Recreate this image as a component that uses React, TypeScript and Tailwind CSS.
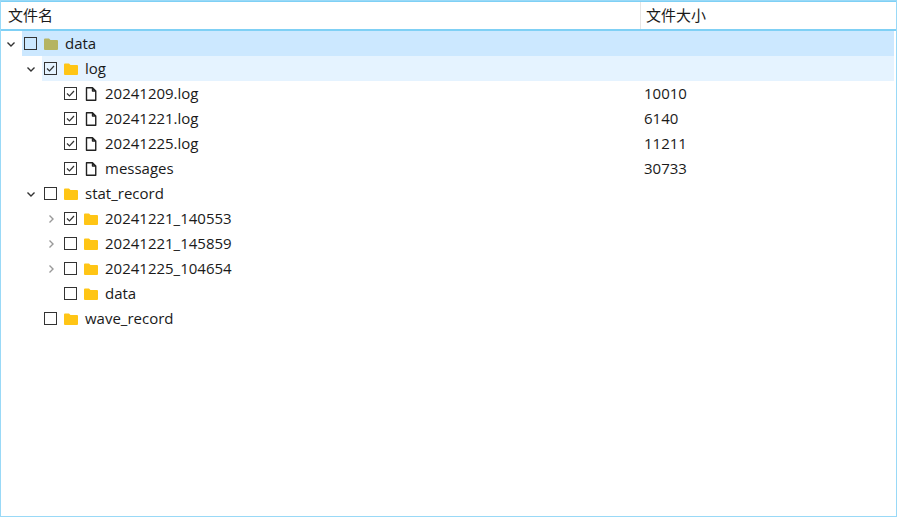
const rows: { name: string; level: number; exp?: "open" | "closed"; checked: boolean; type: "folder" | "file" | "root"; size?: string; bg?: string }[] = [
  { name: "data", level: 0, exp: "open", checked: false, type: "root", bg: "bg-[#cce8ff]" },
  { name: "log", level: 1, exp: "open", checked: true, type: "folder", bg: "bg-[#e5f3ff]" },
  { name: "20241209.log", level: 2, checked: true, type: "file", size: "10010" },
  { name: "20241221.log", level: 2, checked: true, type: "file", size: "6140" },
  { name: "20241225.log", level: 2, checked: true, type: "file", size: "11211" },
  { name: "messages", level: 2, checked: true, type: "file", size: "30733" },
  { name: "stat_record", level: 1, exp: "open", checked: false, type: "folder" },
  { name: "20241221_140553", level: 2, exp: "closed", checked: true, type: "folder" },
  { name: "20241221_145859", level: 2, exp: "closed", checked: false, type: "folder" },
  { name: "20241225_104654", level: 2, exp: "closed", checked: false, type: "folder" },
  { name: "data", level: 2, checked: false, type: "folder" },
  { name: "wave_record", level: 1, checked: false, type: "folder" },
];

function Folder({ color }: { color: string }) {
  return (
    <svg width="14" height="12" viewBox="0 0 14 12">
      <path d="M0 1.5 Q0 0.5 1 0.5 H5 L6.5 2 H13 Q14 2 14 3 V11 Q14 12 13 12 H1 Q0 12 0 11 Z" fill={color} />
    </svg>
  );
}

function FileIcon() {
  return (
    <svg width="12" height="14" viewBox="0 0 12 14">
      <path d="M1.5 0.75 H7.5 L10.75 4 V13.25 H1.5 Z M7.5 0.75 V4 H10.75" fill="none" stroke="#222" strokeWidth="1.4" strokeLinejoin="round" />
    </svg>
  );
}

function Chevron({ open }: { open: boolean }) {
  return (
    <svg width="10" height="10" viewBox="0 0 10 10">
      {open ? (
        <path d="M1.5 3.5 L5 7 L8.5 3.5" fill="none" stroke="#333" strokeWidth="1.4" />
      ) : (
        <path d="M3.5 1.5 L7 5 L3.5 8.5" fill="none" stroke="#999" strokeWidth="1.4" />
      )}
    </svg>
  );
}

export default function App() {
  return (
    <div
      className="w-[897px] h-[517px] bg-white border border-[#99d9f7] text-[15px] text-[#1a1a1a] overflow-hidden"
      style={{ fontFamily: '"Open Sans", "Noto Sans CJK SC", sans-serif' }}
    >
      <div className="h-[31px] flex border-t-2 border-x border-b-2 border-[#7fd0f5] -mx-px -mt-px">
        <div className="w-[640px] pl-[7px] flex items-center border-r border-[#e5e5e5]">文件名</div>
        <div className="flex-1 pl-[5px] flex items-center">文件大小</div>
      </div>
      <div className="pr-[2px]">
        {rows.map((r, i) => (
          <div key={i} className="h-[25px] flex items-center">
            <div style={{ width: 21 + r.level * 20 }} className="shrink-0 h-full flex items-center justify-end pr-[6px]">
              {r.exp && <Chevron open={r.exp === "open"} />}
            </div>
            <div className={`flex items-center h-full flex-1 pl-[2px] ${r.bg ?? ""}`}>
              <div className="w-[13px] h-[13px] border border-[#333] flex items-center justify-center shrink-0">
                {r.checked && (
                  <svg width="11" height="11" viewBox="0 0 11 11">
                    <path d="M2 5.5 L4.5 8 L9 3" fill="none" stroke="#333" strokeWidth="1.2" />
                  </svg>
                )}
              </div>
              <div className="w-[20px] flex justify-center ml-[4px] shrink-0">
                {r.type === "file" ? <FileIcon /> : <Folder color={r.type === "root" ? "#b5b462" : "#ffc515"} />}
              </div>
              <span className="ml-[4px] whitespace-nowrap">{r.name}</span>
              <span className="ml-auto" />
              <div className="w-[253px] pl-[3px] shrink-0">{r.size}</div>
            </div>
          </div>
        ))}
      </div>
    </div>
  );
}
